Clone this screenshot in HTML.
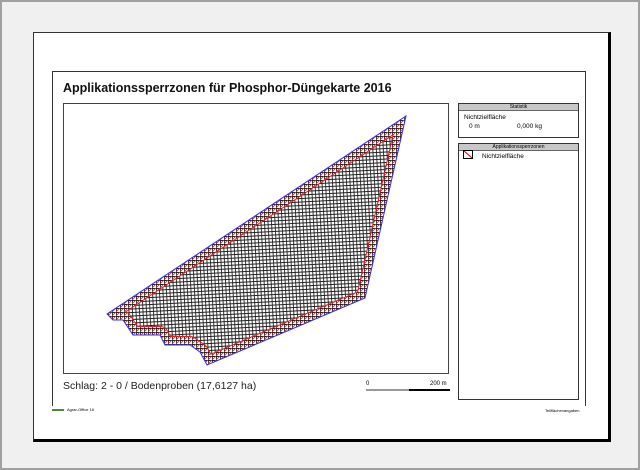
<!DOCTYPE html>
<html><head><meta charset="utf-8"><style>
*{margin:0;padding:0}
body{width:640px;height:470px;background:#f0f0f0;position:relative;overflow:hidden;font-family:"Liberation Sans",sans-serif}
.frame{position:absolute;left:0;top:0;width:636px;height:466px;border:2px solid #a0a0a0}
.page{position:absolute;left:33px;top:32px;width:574px;height:406px;background:#fff;border-left:1px solid #333;border-top:1px solid #333;border-right:3px solid #000;border-bottom:3px solid #000}
.inner{position:absolute;left:52px;top:71px;width:532px;height:334px;border:1px solid #333;border-bottom:none}
.t{position:absolute;white-space:nowrap}
.box{position:absolute;border:1px solid #333;background:#fff}
.hd{background:#c8c8c8;border-bottom:1px solid #666;height:6px;font-size:5px;line-height:6px;text-align:center}
svg{position:absolute;left:0;top:0}
</style></head><body>
<div class="frame"></div>
<div class="page"></div>
<div class="inner"></div>
<div class="t" style="left:63px;top:81px;font-size:12.5px;font-weight:bold;color:#111">Applikationssperrzonen für Phosphor-Düngekarte 2016</div>
<div class="box" style="left:63px;top:103px;width:384px;height:269px;border-color:#444"></div>
<div class="box" style="left:458px;top:103px;width:119px;height:33px"><div class="hd">Statistik</div>
<div class="t" style="left:5px;top:10px;font-size:6.5px">Nichtzielfläche</div>
<div class="t" style="left:10px;top:19px;font-size:6.5px">0 m</div>
<div class="t" style="left:58px;top:19px;font-size:6.5px">0,000 kg</div></div>
<div class="box" style="left:458px;top:143px;width:119px;height:255px"><div class="hd">Applikationssperrzonen</div>
<div class="t" style="left:23px;top:9px;font-size:6.5px">Nichtzielfläche</div></div>
<svg width="640" height="470">
<defs>
<pattern id="g" width="3.5" height="3.5" patternUnits="userSpaceOnUse" patternTransform="rotate(-3)">
<rect width="3.5" height="3.5" fill="#fff"/><path d="M0 0.5H3.5M0.5 0V3.5" stroke="#222" stroke-width="0.9"/></pattern>
<pattern id="h" width="4" height="4" patternUnits="userSpaceOnUse">
<rect width="4" height="4" fill="#fff"/><path d="M0 0.5H4M0.5 0V4" stroke="#222" stroke-width="0.9"/><path d="M0 4L4 0" stroke="#ff2020" stroke-width="0.8"/></pattern>
<clipPath id="c"><polygon points="406,116 365,298 207,365 200,352 190,345 165,345 160,335 133,335 123,320 113,320 107,314"/></clipPath>
</defs>
<polygon points="406,116 365,298 207,365 200,352 190,345 165,345 160,335 133,335 123,320 113,320 107,314" fill="url(#g)"/>
<g clip-path="url(#c)">
<polygon points="406,116 365,298 207,365 200,352 190,345 165,345 160,335 133,335 123,320 113,320 107,314" fill="none" stroke="#e02020" stroke-width="18" stroke-linejoin="round"/>
<polygon points="406,116 365,298 207,365 200,352 190,345 165,345 160,335 133,335 123,320 113,320 107,314" fill="none" stroke="url(#h)" stroke-width="16" stroke-linejoin="round"/>
</g>
<polygon points="406,116 365,298 207,365 200,352 190,345 165,345 160,335 133,335 123,320 113,320 107,314" fill="none" stroke="#3030ff" stroke-width="1"/>
<rect x="366" y="389" width="43" height="2" fill="#999"/><rect x="409" y="389" width="41" height="2" fill="#000"/>
<rect x="463.5" y="150.5" width="9" height="8" fill="#fff" stroke="#000" stroke-width="1"/><path d="M464 151L472 158" stroke="#d00" stroke-width="1"/>
<rect x="52" y="409" width="12" height="2" fill="#4a8a3a"/>
</svg>
<div class="t" style="left:366px;top:381px;font-size:6px">0</div>
<div class="t" style="left:430px;top:381px;font-size:6px">200 m</div>
<div class="t" style="left:63px;top:380px;font-size:10.5px;color:#222">Schlag: 2 - 0 / Bodenproben (17,6127 ha)</div>
<div class="t" style="left:67px;top:407px;font-size:4px">Agrar-Office 16</div>
<div class="t" style="left:545px;top:408px;font-size:4px">Teilflächenangaben</div>
</body></html>
